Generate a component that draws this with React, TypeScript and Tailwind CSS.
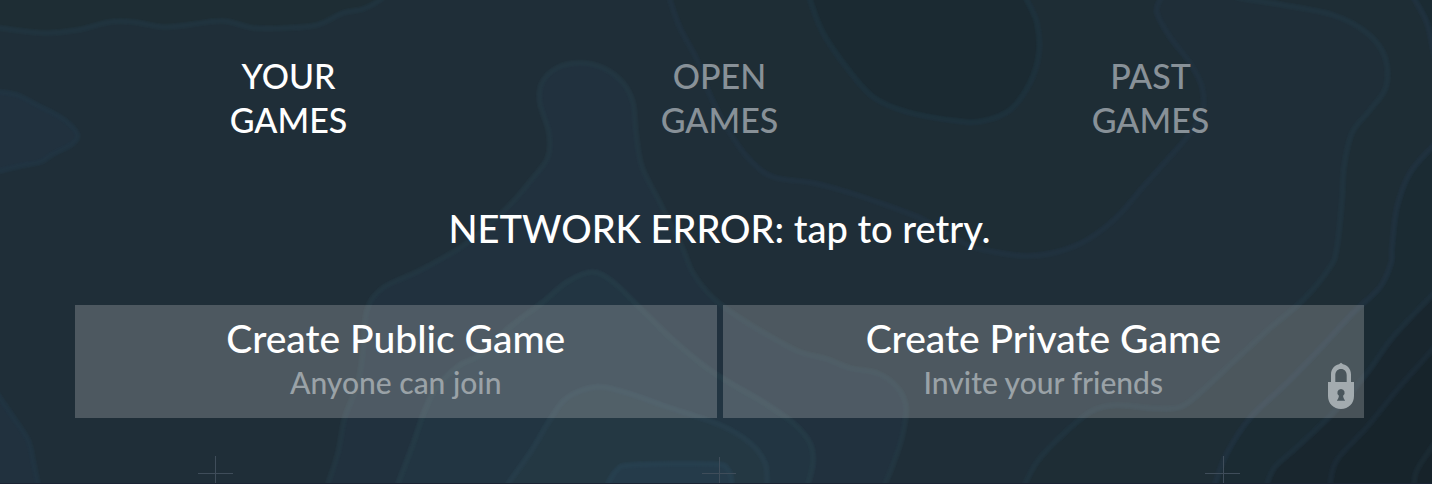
import clsx from "clsx";
import { useState } from "react";

type Point = [number, number];

type Contour = {
  points: Point[];
  // extra corners that close the filled area outside the view
  corners?: Point[];
  fill: string;
  line: string;
};

const contours: Contour[] = [
  {
    points: [[-8, 25], [0, 28], [43, 33], [77, 30], [110, 22], [133, 22], [163, 27], [187, 25], [223, 21], [253, 28], [283, 28], [317, 25], [343, 13], [363, 9], [380, 0], [386, -8]],
    corners: [[-8, -8]],
    fill: "#1e2d34",
    line: "#213541",
  },
  {
    points: [[-8, 91], [0, 92], [17, 95], [37, 105], [63, 119], [77, 134], [72, 144], [53, 154], [40, 162], [20, 166], [0, 171], [-8, 174]],
    fill: "#21313e",
    line: "#223642",
  },
  {
    points: [[-8, 386], [0, 398], [13, 417], [28, 440], [33, 460], [38, 484], [42, 494]],
    corners: [[-8, 494]],
    fill: "#21313e",
    line: "#223642",
  },
  {
    points: [[325, 494], [328, 484], [338, 453], [345, 417], [358, 383], [363, 350], [367, 310], [383, 288], [417, 272], [443, 258], [467, 243], [507, 208], [533, 178], [548, 157], [549, 133], [540, 103], [542, 83], [557, 68], [580, 63], [603, 68], [623, 83], [633, 103], [636, 133], [642, 167], [660, 203], [682, 247], [693, 273], [713, 298], [740, 318], [773, 338], [800, 352], [827, 359], [850, 368], [877, 373], [897, 387], [906, 407], [902, 437], [892, 467], [885, 484], [881, 494]],
    fill: "#21313e",
    line: "#233743",
  },
  {
    points: [[395, 494], [398, 484], [412, 447], [425, 410], [437, 387], [460, 365], [480, 355], [510, 327], [543, 302], [567, 282], [592, 272], [613, 282], [640, 308], [673, 340], [707, 368], [737, 387], [763, 402], [793, 423], [810, 443], [813, 463], [808, 484], [805, 494]],
    fill: "#223542",
    line: "#253b48",
  },
  {
    points: [[502, 494], [508, 484], [530, 453], [550, 420], [567, 398], [597, 387], [627, 393], [667, 407], [720, 425], [750, 443], [765, 463], [767, 484], [767, 494]],
    fill: "#243843",
    line: "#273e4c",
  },
  {
    points: [[605, 494], [608, 484], [617, 470], [633, 465], [713, 464], [728, 470], [732, 484], [732, 494]],
    fill: "#253b4a",
    line: "#274150",
  },
  {
    points: [[668, -8], [670, 0], [680, 28], [697, 60], [710, 95], [730, 133], [750, 160], [773, 177], [813, 183], [847, 192], [880, 203], [920, 218], [948, 234], [973, 247], [1000, 253], [1027, 256], [1057, 252], [1087, 240], [1117, 217], [1143, 187], [1167, 160], [1187, 137], [1202, 113], [1202, 87], [1190, 63], [1170, 37], [1157, 13], [1160, 0], [1166, -8]],
    fill: "#1e2d35",
    line: "#213440",
  },
  {
    points: [[809, -8], [810, 0], [823, 33], [847, 68], [873, 97], [907, 112], [957, 121], [983, 121], [1010, 110], [1030, 83], [1039, 53], [1037, 23], [1027, 0], [1023, -8]],
    fill: "#1b2a32",
    line: "#20323e",
  },
  {
    points: [[1225, -8], [1240, -2], [1283, 5], [1333, 15], [1367, 33], [1385, 57], [1386, 87], [1370, 110], [1352, 133], [1344, 167], [1342, 200], [1337, 247], [1330, 267], [1303, 300], [1270, 328], [1233, 362], [1203, 390], [1180, 407], [1150, 408], [1117, 405], [1090, 412], [1057, 440], [1037, 462], [1025, 484], [1021, 494]],
    corners: [[1440, 494], [1440, -8]],
    fill: "#1e2d35",
    line: "#213541",
  },
  {
    points: [[1412, -8], [1415, 0], [1427, 23], [1434, 54], [1440, 80]],
    corners: [[1440, -8]],
    fill: "#1b2b33",
    line: "#213440",
  },
  {
    points: [[1440, 140], [1432, 147], [1410, 173], [1397, 207], [1392, 247], [1391, 263], [1380, 287], [1353, 313], [1317, 352], [1287, 383], [1250, 418], [1227, 453], [1215, 484], [1212, 494]],
    corners: [[1440, 494]],
    fill: "#1b2b33",
    line: "#213440",
  },
  {
    points: [[1440, 284], [1432, 295], [1393, 337], [1367, 373], [1333, 413], [1297, 447], [1275, 467], [1267, 484], [1264, 494]],
    corners: [[1440, 494]],
    fill: "#19262e",
    line: "#1f303c",
  },
  {
    points: [[1440, 340], [1432, 350], [1397, 390], [1367, 427], [1337, 460], [1330, 484], [1328, 494]],
    corners: [[1440, 494]],
    fill: "#17242b",
    line: "#1d2d37",
  },
  {
    points: [[1440, 438], [1432, 447], [1417, 470], [1414, 484], [1413, 494]],
    corners: [[1440, 494]],
    fill: "#17232a",
    line: "#1d2c36",
  },
];

// Catmull-Rom spline through the points, written as cubic segments
const smoothPath = (points: Point[]) => {
  let d = `M${points[0][0]},${points[0][1]}`;
  for (let i = 0; i < points.length - 1; i++) {
    const p0 = points[i - 1] ?? points[i];
    const p1 = points[i];
    const p2 = points[i + 1];
    const p3 = points[i + 2] ?? p2;
    d += `C${p1[0] + (p2[0] - p0[0]) / 6},${p1[1] + (p2[1] - p0[1]) / 6} ${p2[0] - (p3[0] - p1[0]) / 6},${p2[1] - (p3[1] - p1[1]) / 6} ${p2[0]},${p2[1]}`;
  }
  return d;
};

const Terrain = () => (
  <svg
    className="absolute inset-0 h-full w-full"
    viewBox="0 0 1432 484"
    preserveAspectRatio="xMidYMin slice"
    aria-hidden="true"
  >
    {contours.map(({ points, corners = [], fill, line }, i) => {
      const d = smoothPath(points);
      return (
        <g key={i} fill="none" stroke={line} strokeOpacity="0.45">
          <path
            d={`${d}${corners.map(([x, y]) => `L${x},${y}`).join("")}Z`}
            fill={fill}
            stroke="none"
          />
          <path d={d} strokeWidth="7" />
          <path d={d} strokeWidth="5" />
          <path d={d} strokeWidth="3" />
        </g>
      );
    })}
    <path
      d="M198 473.5h35M215.5 456v28M702 473.5h34M719.5 457v27M1205 473.5h35M1223.5 456v28"
      stroke="#3f4d5a"
      fill="none"
    />
    <path d="M0 483.5h1432" stroke="#1b2434" />
  </svg>
);

const LockIcon = ({ className }: { className?: string }) => (
  <svg className={className} viewBox="0 0 26 48" fill="#a3abaf" aria-hidden="true">
    <path
      fillRule="evenodd"
      d="M3 20V12.500C3 7 6.300 3.200 11 2.200L13 .8L15 2.200C19.700 3.200 23 7 23 12.500V20H26V34C26 41.500 20.500 47 13 47S0 41.500 0 34V20ZM7.300 20H18.700V13.500C18.700 9.500 16.500 7 13 7S7.300 9.500 7.300 13.500ZM13 27A3.700 3.700 0 0 0 10.900 33.700C10.800 35.500 10 37.200 8.800 38.700H17.200C16 37.200 15.200 35.500 15.100 33.700A3.700 3.700 0 0 0 13 27Z"
    />
  </svg>
);

type CreateButtonProps = {
  title: string;
  hint: string;
  locked?: boolean;
};

const CreateButton = ({ title, hint, locked }: CreateButtonProps) => (
  <button
    type="button"
    className="relative flex grow basis-0 flex-col items-center bg-[#d6d6d6]/25 pt-2 pb-[17px] cursor-pointer"
  >
    <span className="text-[39px] leading-[50px] text-white">{title}</span>
    <span className="text-[30px] leading-[38px] text-[#9aa2a7]">{hint}</span>
    {locked && <LockIcon className="absolute right-2.5 bottom-2 h-12 w-[26px]" />}
  </button>
);

const tabs = ["Your", "Open", "Past"];

const App = () => {
  const [active, setActive] = useState("Your");

  return (
    <div className="relative min-h-screen overflow-hidden bg-[#1f2e38] font-['Lato',sans-serif] font-medium">
      <Terrain />
      <main className="relative flex flex-col pt-[54px] pr-[66px] pb-[66px] pl-[73px]">
        <nav className="grid grid-cols-3">
          {tabs.map((tab) => (
            <button
              key={tab}
              type="button"
              onClick={() => setActive(tab)}
              className={clsx(
                "flex flex-col items-center text-[34px] leading-[44px] uppercase cursor-pointer",
                active === tab ? "text-white" : "text-[#889198]"
              )}
            >
              <span>{tab}</span>
              <span>Games</span>
            </button>
          ))}
        </nav>

        <button
          type="button"
          className="mt-[61px] self-center text-[38px] leading-[50px] text-white cursor-pointer"
        >
          NETWORK ERROR: tap to retry.
        </button>

        <div className="mt-[52px] flex gap-1.5 px-0.5">
          <CreateButton title="Create Public Game" hint="Anyone can join" />
          <CreateButton title="Create Private Game" hint="Invite your friends" locked />
        </div>
      </main>
    </div>
  );
};

export default App;
